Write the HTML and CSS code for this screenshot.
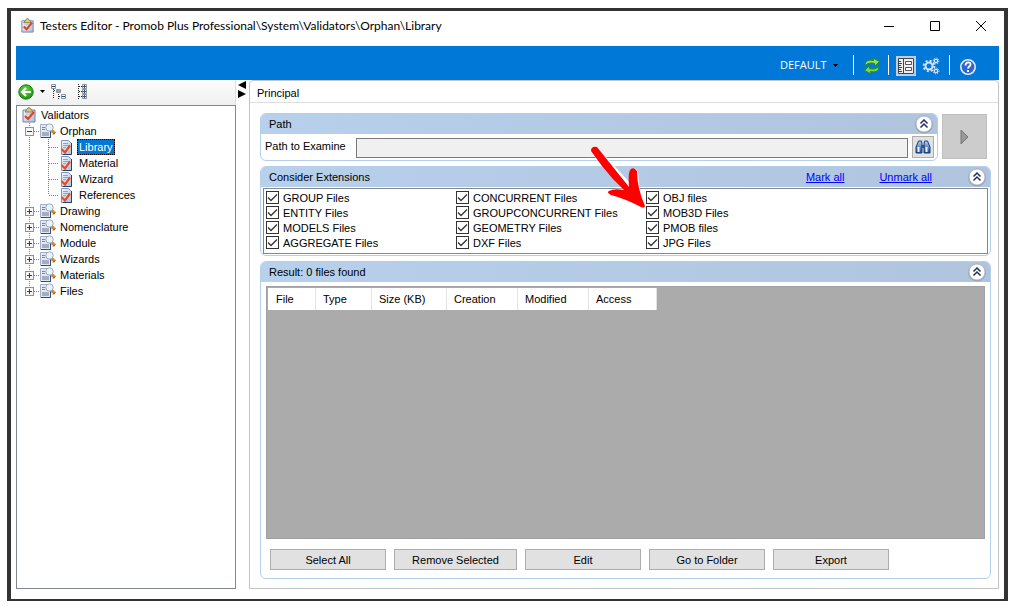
FILE: index.html
```html
<!DOCTYPE html>
<html lang="en">
<head>
    <meta charset="UTF-8">
    <meta name="viewport" content="width=device-width, initial-scale=1.0">
    <title>Testers Editor</title>
    <link rel="stylesheet" href="styles.css">
</head>
<body>

<!-- Shared icons -->
<svg class="defs" width="0" height="0">
    <defs>
        <linearGradient id="paper" x1="0" y1="0" x2="1" y2="1">
            <stop offset="0" stop-color="#f4f8fd"/>
            <stop offset="1" stop-color="#a9bddb"/>
        </linearGradient>
        <linearGradient id="steel" x1="0" y1="0" x2="0" y2="1">
            <stop offset="0" stop-color="#b9d0ee"/>
            <stop offset="1" stop-color="#1f4788"/>
        </linearGradient>
        <radialGradient id="green" cx="0.45" cy="0.35" r="0.7">
            <stop offset="0" stop-color="#6fdc3c"/>
            <stop offset="1" stop-color="#188a12"/>
        </radialGradient>
    </defs>
    <symbol id="clipboard" viewBox="0 0 16 16">
        <path d="M2 3h12v12H2z" fill="url(#paper)" stroke="#6d82a8"/>
        <path d="M4 5L6 2Q8-1 10 2L12 5z" fill="#d9c98c" stroke="#8c7b45"/>
        <path d="M5 7h7" stroke="#b8c4d8"/>
        <path d="M4 9l3 3 6-7" fill="none" stroke="#e2431e" stroke-width="2.2"/>
    </symbol>
    <symbol id="check-doc" viewBox="0 0 16 16">
        <path d="M2.500 1.500h7l3 3v11h-10z" fill="url(#paper)" stroke="#8195b8"/>
        <path d="M12.500 4v11.500H4" fill="none" stroke="#27406f"/>
        <path d="M4 4.500h5M4 6.500h6M4 8.500h3" stroke="#8fa3c4"/>
        <path d="M2.500 10l3.500 3.500 5-7" fill="none" stroke="#e2502c" stroke-width="2.2"/>
    </symbol>
    <symbol id="search-doc" viewBox="0 0 16 16">
        <path d="M0.500 1.500h10v13h-10z" fill="#e3e9f2" stroke="#a3afc4"/>
        <path d="M10.500 8v6.500H1" fill="none" stroke="#2f4a75"/>
        <path d="M2 4.500h3M2 6.500h3" stroke="#6f86ad"/>
        <path d="M2 9h7v4H2z" fill="#a4b0c2"/>
        <path d="M11.500 7.500l3.500 3" stroke="#d98a27" stroke-width="3"/>
        <path d="M13 11.500l2-2" stroke="#7b4c12"/>
        <circle cx="9.500" cy="4.500" r="3.700" fill="#e9f3fc" stroke="#9aa8be"/>
    </symbol>
    <symbol id="plus" viewBox="0 0 20 16">
        <path class="dots" d="M9.500 0v16M14 8.500h6"/>
        <rect x="5.500" y="4.500" width="8" height="8" fill="#f6f6f6" stroke="#919191"/>
        <path d="M7 8.500h5M9.500 6v5" stroke="#27417e"/>
    </symbol>
    <symbol id="plus-end" viewBox="0 0 20 16">
        <path class="dots" d="M9.500 0v5M14 8.500h6"/>
        <rect x="5.500" y="4.500" width="8" height="8" fill="#f6f6f6" stroke="#919191"/>
        <path d="M7 8.500h5M9.500 6v5" stroke="#27417e"/>
    </symbol>
    <symbol id="minus" viewBox="0 0 20 16">
        <path class="dots" d="M9.500 0v16M14 8.500h6"/>
        <rect x="5.500" y="4.500" width="8" height="8" fill="#f6f6f6" stroke="#919191"/>
        <path d="M7 8.500h5" stroke="#27417e"/>
    </symbol>
    <symbol id="branch" viewBox="0 0 39 16">
        <path class="dots" d="M9.500 0v16M28.500 0v16M29 8.500h10"/>
    </symbol>
    <symbol id="branch-end" viewBox="0 0 39 16">
        <path class="dots" d="M9.500 0v16M28.500 0v8M29 8.500h10"/>
    </symbol>
    <symbol id="chevrons" viewBox="0 0 20 20">
        <circle cx="10" cy="10.500" r="9" fill="#8b93a6" opacity="0.7"/>
        <circle cx="10" cy="10" r="8" fill="#fff" stroke="#b5bac8"/>
        <path d="M6.500 9.500L10 6l3.500 3.500M6.500 13.500L10 10l3.500 3.500" fill="none" stroke="#1e2f66" stroke-width="1.5"/>
    </symbol>
</svg>

<div class="window">
    <header class="titlebar">
        <svg class="app-icon"><use href="#clipboard"/></svg>
        <h1>Testers Editor - Promob Plus Professional\System\Validators\Orphan\Library</h1>
        <div class="window-buttons">
            <button aria-label="Minimize"><svg width="12" height="12"><path d="M1 6.500h10" stroke="#000"/></svg></button>
            <button aria-label="Maximize"><svg width="12" height="12"><path d="M1.500 1.500h9v9h-9z" fill="none" stroke="#000"/></svg></button>
            <button aria-label="Close"><svg width="12" height="12"><path d="M1 1l10 10M11 1L1 11" stroke="#000"/></svg></button>
        </div>
    </header>

    <!-- Blue toolbar -->
    <nav class="toolbar">
        <select class="profile" aria-label="Profile">
            <option>DEFAULT</option>
        </select>
        <span class="divider"></span>
        <button aria-label="Refresh">
            <svg width="18" height="18" viewBox="0 0 18 18">
                <path d="M2 8.500C2 3.500 6 2.500 10.500 3.500L10 1l6.500 3.500L12 9l-.5-2.500C8 5.500 5 6 2 8.500z" fill="#8be05a" stroke="#2b8a1e"/>
                <path d="M16 9.500c0 5-4 6-8.500 5L8 17l-6.500-3.500L6 9l.5 2.500c3.500 1 6.500.500 9.500-2z" fill="#7ad648" stroke="#2b8a1e"/>
            </svg>
        </button>
        <span class="divider"></span>
        <button class="active" aria-label="Properties">
            <svg width="18" height="18" viewBox="0 0 18 18">
                <path d="M1.500 1.500h15v15h-15z" fill="#eee" stroke="#444"/>
                <path d="M6.500 1v16M2 4.500h2M2 6.500h3M2 8.500h2M2 10.500h3M2 12.500h2M2 14.500h3" stroke="#444"/>
                <path d="M8.500 4.500h6v3h-6zM8.500 10.500h6v3h-6z" fill="#fff" stroke="#555"/>
            </svg>
        </button>
        <button aria-label="Settings">
            <svg width="18" height="18" viewBox="0 0 18 18" fill="none" stroke="#d5e3f5">
                <circle cx="7" cy="9" r="3.500" stroke-width="2"/>
                <circle cx="7" cy="9" r="5.300" stroke-width="2" stroke-dasharray="2 2.160"/>
                <circle cx="14" cy="4" r="1.700" stroke-width="1.300"/>
                <circle cx="14" cy="4" r="2.900" stroke-dasharray="1.200 1.080"/>
                <circle cx="14" cy="14" r="1.700" stroke-width="1.300"/>
                <circle cx="14" cy="14" r="2.900" stroke-dasharray="1.200 1.080"/>
            </svg>
        </button>
        <span class="divider"></span>
        <button class="help" aria-label="Help">
            <svg width="16" height="16" viewBox="0 0 16 16">
                <circle cx="8" cy="8" r="7.200" fill="#2f66d2" stroke="#e4ebf7" stroke-width="1.600"/>
                <path d="M5.500 6.500c0-4 5-4 5-1 0 2-2.500 2-2.500 4" fill="none" stroke="#fff" stroke-width="1.800"/>
                <path d="M7 11h2v2H7z" fill="#fff"/>
            </svg>
        </button>
    </nav>

    <div class="content">
        <aside class="sidebar">
            <div class="side-tools">
                <button aria-label="Back">
                    <svg width="16" height="16" viewBox="0 0 16 16">
                        <circle cx="8" cy="8" r="7.200" fill="url(#green)" stroke="#188012"/>
                        <path d="M13 8H4M8 4L4 8l4 4" fill="none" stroke="#fff" stroke-width="2.200"/>
                    </svg>
                </button>
                <button class="caret" aria-label="History"><svg width="5" height="3"><path d="M0 0h5L2.500 3z"/></svg></button>
                <button aria-label="Collapse all">
                    <svg width="16" height="16" viewBox="0 0 16 16" fill="none">
                        <path class="dark-dots" d="M2.500 5v10M3 6.500h3M7.500 10v5M8 12.500h3"/>
                        <path d="M0.500 0.500h4v4h-4zM5.500 5.500h4v3h-4zM10.500 10.500h4v4h-4z" fill="#fff" stroke="#8a9299"/>
                        <path d="M1 2.500h3M6 7h3M11 12.500h3" stroke="#27417e"/>
                    </svg>
                </button>
                <button class="expand" aria-label="Expand all">
                    <svg width="9" height="16" viewBox="0 0 9 16" fill="none">
                        <path class="dark-dots" d="M0.500 0v16M1 2.500h3M1 7.500h3M1 12.500h3"/>
                        <path d="M4.500 0.500h4v4h-4zM4.500 5.500h4v4h-4zM4.500 10.500h4v4h-4z" fill="#fff" stroke="#8a9299"/>
                        <path d="M5 2.500h3M6.500 1v3M5 7.500h3M6.500 6v3M5 12.500h3M6.500 11v3" stroke="#27517e"/>
                    </svg>
                </button>
            </div>

            <ul class="tree">
                <li class="root"><svg class="icon"><use href="#clipboard"/></svg><span>Validators</span></li>
                <li><svg class="node"><use href="#minus"/></svg><svg class="icon"><use href="#search-doc"/></svg><span>Orphan</span></li>
                <li><svg class="leaf"><use href="#branch"/></svg><svg class="icon"><use href="#check-doc"/></svg><span class="selected">Library</span></li>
                <li><svg class="leaf"><use href="#branch"/></svg><svg class="icon"><use href="#check-doc"/></svg><span>Material</span></li>
                <li><svg class="leaf"><use href="#branch"/></svg><svg class="icon"><use href="#check-doc"/></svg><span>Wizard</span></li>
                <li><svg class="leaf"><use href="#branch-end"/></svg><svg class="icon"><use href="#check-doc"/></svg><span>References</span></li>
                <li><svg class="node"><use href="#plus"/></svg><svg class="icon"><use href="#search-doc"/></svg><span>Drawing</span></li>
                <li><svg class="node"><use href="#plus"/></svg><svg class="icon"><use href="#search-doc"/></svg><span>Nomenclature</span></li>
                <li><svg class="node"><use href="#plus"/></svg><svg class="icon"><use href="#search-doc"/></svg><span>Module</span></li>
                <li><svg class="node"><use href="#plus"/></svg><svg class="icon"><use href="#search-doc"/></svg><span>Wizards</span></li>
                <li><svg class="node"><use href="#plus"/></svg><svg class="icon"><use href="#search-doc"/></svg><span>Materials</span></li>
                <li><svg class="node"><use href="#plus-end"/></svg><svg class="icon"><use href="#search-doc"/></svg><span>Files</span></li>
            </ul>
        </aside>

        <div class="splitter">
            <svg width="8" height="18"><path d="M8 0v8L0 4zM0 9v8l8-4z"/></svg>
        </div>

        <main class="main">
            <h2 class="tab">Principal</h2>

            <div class="panels">
                <div class="path-row">
                    <section class="panel path-panel">
                        <div class="panel-head">
                            <h3>Path</h3>
                            <button aria-label="Collapse path"><svg width="20" height="20"><use href="#chevrons"/></svg></button>
                        </div>
                        <div class="path-body">
                            <label for="path">Path to Examine</label>
                            <input id="path" type="text" readonly>
                            <button class="browse" aria-label="Browse">
                                <svg width="16" height="14" viewBox="0 0 16 14">
                                    <path d="M3.500 1h3l.5 3v9H1V7zM9.500 1h3L15 7v6H9V4z" fill="url(#steel)" stroke="#173f83"/>
                                    <path d="M6 5h4v3H6z" fill="#31578f"/>
                                    <path d="M3.500 7v5M11.500 7v5" stroke="#e9f3ff" stroke-width="2"/>
                                </svg>
                            </button>
                        </div>
                    </section>
                    <button class="run" aria-label="Run">
                        <svg width="10" height="16"><path d="M1 1v14l7-7z" fill="#999" stroke="#777"/></svg>
                    </button>
                </div>

                <section class="panel">
                    <div class="panel-head">
                        <h3>Consider Extensions</h3>
                        <a href="#mark">Mark all</a>
                        <a href="#unmark">Unmark all</a>
                        <button aria-label="Collapse extensions"><svg width="20" height="20"><use href="#chevrons"/></svg></button>
                    </div>
                    <div class="extensions">
                        <label><input type="checkbox" checked>GROUP Files</label>
                        <label><input type="checkbox" checked>ENTITY Files</label>
                        <label><input type="checkbox" checked>MODELS Files</label>
                        <label><input type="checkbox" checked>AGGREGATE Files</label>
                        <label><input type="checkbox" checked>CONCURRENT Files</label>
                        <label><input type="checkbox" checked>GROUPCONCURRENT Files</label>
                        <label><input type="checkbox" checked>GEOMETRY Files</label>
                        <label><input type="checkbox" checked>DXF Files</label>
                        <label><input type="checkbox" checked>OBJ files</label>
                        <label><input type="checkbox" checked>MOB3D Files</label>
                        <label><input type="checkbox" checked>PMOB files</label>
                        <label><input type="checkbox" checked>JPG Files</label>
                    </div>
                    <svg class="pointer" width="58" height="66" viewBox="0 0 58 66">
                        <path d="M5 5L42 45M44 27L46 46L24 47" fill="none" stroke="#fff" stroke-width="8" stroke-linecap="round"/>
                        <path d="M1 5Q1 0 7 1L39 41Q38 28 40 24Q43 20 47 25Q47 42 55 60Q54 63 51 61Q36 53 21 49Q16 46 19 45Q24 42 34 44Q22 33 12 20z" fill="#f00"/>
                    </svg>
                </section>

                <section class="panel result">
                    <div class="panel-head">
                        <h3>Result: 0 files found</h3>
                        <button aria-label="Collapse result"><svg width="20" height="20"><use href="#chevrons"/></svg></button>
                    </div>
                    <div class="grid">
                        <table>
                            <colgroup>
                                <col class="c-file"><col class="c-type"><col class="c-size"><col class="c-date"><col class="c-date"><col class="c-access">
                            </colgroup>
                            <thead>
                                <tr><th>File</th><th>Type</th><th>Size (KB)</th><th>Creation</th><th>Modified</th><th>Access</th></tr>
                            </thead>
                        </table>
                    </div>
                    <div class="actions">
                        <button>Select All</button>
                        <button class="wide">Remove Selected</button>
                        <button>Edit</button>
                        <button>Go to Folder</button>
                        <button>Export</button>
                    </div>
                </section>
            </div>
        </main>
    </div>
</div>

</body>
</html>
```

FILE: styles.css
```css
* {
    box-sizing: border-box;
}

body {
    margin: 0;
    padding: 8px 9px 12px 7px;
    min-height: 100vh;
    display: flex;
    background-color: #fff;
    color: #000;
    font-family: "Liberation Sans", Arial, sans-serif;
    font-size: 11px;
    line-height: 16px;
}

button {
    display: flex;
    align-items: center;
    justify-content: center;
    padding: 0;
    border: none;
    background: none;
    color: inherit;
    font: inherit;
    cursor: pointer;
}

h1, h2, h3 {
    margin: 0;
    font-size: 11px;
    font-weight: normal;
}

.defs {
    position: absolute;
}

.dots,
.dark-dots {
    fill: none;
    stroke: #808080;
    stroke-dasharray: 1 1;
}

.dark-dots {
    stroke: #222;
}

.window {
    flex: 1;
    display: flex;
    flex-direction: column;
    border: 4px solid #333;
    border-width: 3px 4px 2px;
    padding: 0 5px 10px;
}

/* Title bar */
.titlebar {
    display: flex;
    align-items: center;
    height: 35px;
    padding: 0 12px 6px 4px;
}

.titlebar h1 {
    flex: 1;
    margin-left: 5px;
    font-family: Lato, "Open Sans", sans-serif;
    font-size: 12px;
}

.app-icon {
    width: 15px;
    height: 15px;
}

.window-buttons {
    display: flex;
    gap: 34px;
}

/* Blue toolbar */
.toolbar {
    display: flex;
    align-items: center;
    justify-content: flex-end;
    height: 34px;
    padding: 4px 23px 0 0;
    background-color: #0078d7;
}

.profile {
    width: 62px;
    margin-right: 11px;
    padding: 0;
    border: none;
    appearance: none;
    background: url("data:image/svg+xml,%3Csvg xmlns='http://www.w3.org/2000/svg' width='5' height='3'%3E%3Cpath d='M0 0h5L2.500 3z'/%3E%3C/svg%3E") no-repeat right 4px center;
    color: #fff;
    font: 11px/18px "Open Sans", "Noto Sans", sans-serif;
}

.divider {
    width: 1px;
    height: 20px;
    background-color: #fff;
}

.toolbar button {
    width: 20px;
    height: 20px;
    margin: 2px 6px 0 8px;
}

.toolbar .active {
    margin: 2px 0 0 7px;
    background-color: #bccfe4;
}

.toolbar .active + button {
    margin: 2px 8px 0 5px;
}

.toolbar .help {
    width: 16px;
    margin: 4px 0 0 10px;
}

.content {
    flex: 1;
    display: flex;
}

/* Left tree */
.sidebar {
    width: 220px;
    display: flex;
    flex-direction: column;
}

.side-tools {
    display: flex;
    align-items: center;
    height: 25px;
    padding: 0 0 2px 2px;
    border-right: 1px solid #ddd;
    background: linear-gradient(#fcfcfc, #f0f0f0);
}

.side-tools .caret {
    margin: 0 6px;
}

.side-tools .expand {
    margin-left: 11px;
}

.tree {
    flex: 1;
    margin: 0;
    padding: 1px 0 0 3px;
    border: 1px solid #828790;
    list-style: none;
}

.tree li {
    display: flex;
    height: 16px;
}

.tree .root {
    padding-left: 1px;
}

.tree .node {
    width: 20px;
    height: 16px;
}

.tree .leaf {
    width: 39px;
    height: 16px;
}

.tree .icon {
    width: 16px;
    height: 16px;
}

.tree span {
    margin-left: 2px;
    padding: 0 2px;
}

.tree .selected {
    outline: 1px dotted #000;
    outline-offset: -1px;
    background-color: #0078d7;
    color: #fff;
}

.splitter {
    width: 13px;
    padding: 1px 0 0 2px;
}

/* Right side */
.main {
    flex: 1;
    display: flex;
    flex-direction: column;
    border: 1px solid #c4c4c4;
    border-radius: 4px 4px 0 0;
}

.tab {
    height: 22px;
    padding: 4px 7px 0;
    border-bottom: 1px solid #ddd;
}

.panels {
    flex: 1;
    display: flex;
    flex-direction: column;
    gap: 5px;
    padding: 10px 7px 9px 10px;
}

.path-row {
    display: flex;
    gap: 4px;
    padding-right: 4px;
}

.path-panel {
    flex: 1;
}

.panel {
    position: relative;
    border: 1px solid #b5cfeb;
    border-radius: 6px;
}

.panel-head {
    display: flex;
    align-items: center;
    height: 20px;
    padding: 0 3px 0 8px;
    border-radius: 5px 5px 0 0;
    background: linear-gradient(to right, #b7d0ec, #b0c4de);
}

.panel-head h3 {
    flex: 1;
}

.panel-head a {
    margin-right: 35px;
    color: #0000ff;
}

.path-body {
    display: flex;
    height: 26px;
    padding: 2px 3px 2px 4px;
}

.path-body label {
    width: 91px;
    padding-top: 2px;
}

.path-body input {
    flex: 1;
    min-width: 0;
    height: 20px;
    margin: 2px 4px 0 0;
    border: 1px solid #7a7a7a;
    background-color: #f0f0f0;
}

.browse {
    width: 22px;
    height: 22px;
    border: 1px solid #adadad;
    background-color: #e1e1e1;
}

.run {
    width: 45px;
    height: 45px;
    margin-top: 1px;
    border: 1px solid #bfbfbf;
    background-color: #ccc;
}

.extensions {
    display: grid;
    grid-template-columns: repeat(3, 190px);
    grid-template-rows: repeat(4, 15px);
    grid-auto-flow: column;
    margin: 1px 2px;
    padding: 1px 2px 3px;
    border: 1px solid #828790;
}

.extensions label {
    display: flex;
    align-items: center;
    gap: 4px;
}

.extensions input {
    width: 13px;
    height: 13px;
    margin: 0;
    border: 1px solid #333;
    appearance: none;
    background: url("data:image/svg+xml,%3Csvg xmlns='http://www.w3.org/2000/svg' width='11' height='11'%3E%3Cpath d='M1 5.500l3 3 6-6' fill='none' stroke='%23333' stroke-width='1.300'/%3E%3C/svg%3E");
}

/* Red arrow lying over the panels */
.pointer {
    position: absolute;
    left: 329px;
    top: -21px;
}

.result {
    flex: 1;
    display: flex;
    flex-direction: column;
}

.grid {
    flex: 1;
    margin: 4px 5px 0;
    padding: 1px 1px 0;
    border: 1px solid #a0a0a0;
    background-color: #ababab;
}

.grid table {
    width: 389px;
    border-collapse: separate;
    border-spacing: 0;
    table-layout: fixed;
}

.grid th {
    height: 22px;
    padding: 0 8px;
    border-right: 1px solid #e3e3e3;
    background-color: #fff;
    font-weight: normal;
    text-align: left;
}

.grid th + th {
    padding-left: 7px;
}

.c-file {
    width: 48px;
}

.c-type {
    width: 56px;
}

.c-size {
    width: 75px;
}

.c-date {
    width: 71px;
}

.c-access {
    width: 68px;
}

.actions {
    display: flex;
    gap: 8px;
    padding: 10px 9px 8px;
}

.actions button {
    width: 116px;
    height: 21px;
    border: 1px solid #adadad;
    background-color: #e1e1e1;
}

.actions .wide {
    width: 123px;
}
```
